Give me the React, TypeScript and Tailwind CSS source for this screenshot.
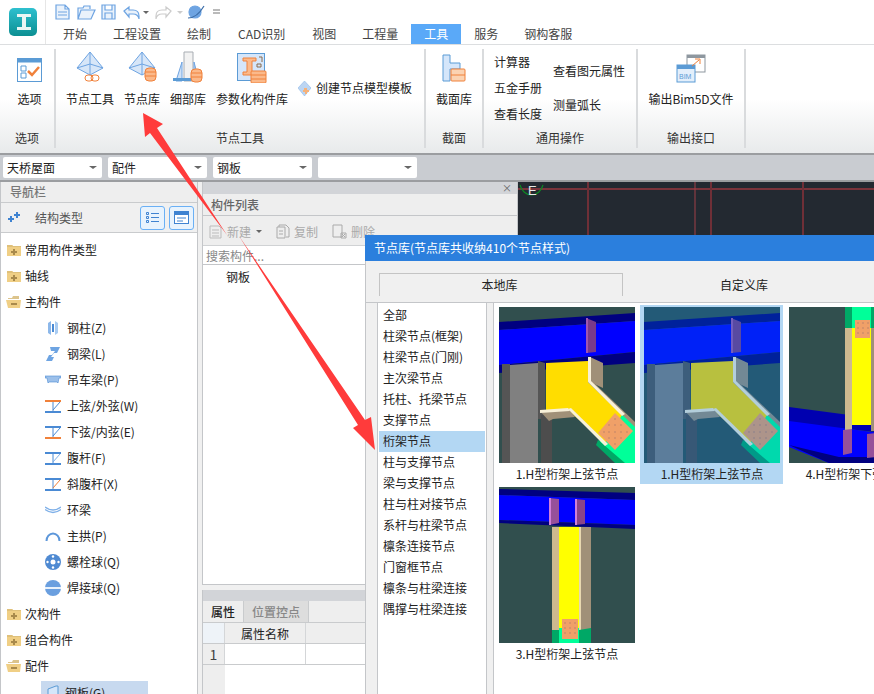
import type { ReactNode } from "react";

const tabs = ["开始", "工程设置", "绘制", "CAD识别", "视图", "工程量", "工具", "服务", "钢构客服"];
const nodeTypes = [
  "全部", "柱梁节点(框架)", "柱梁节点(门刚)", "主次梁节点", "托柱、托梁节点", "支撑节点", "桁架节点", "柱与支撑节点",
  "梁与支撑节点", "柱与柱对接节点", "系杆与柱梁节点", "檩条连接节点", "门窗框节点", "檩条与柱梁连接", "隅撑与柱梁连接",
];

const Folder = ({ open }: { open?: boolean }) => (
  <svg width="16" height="14" viewBox="0 0 16 14" className="shrink-0">
    {open ? (
      <>
        <path d="M2 3h4l1-2h6v3H2z" fill="#dcc48c" />
        <path d="M0 5h15l-1 8H2z" fill="#f0cf85" />
        <rect x="5" y="8" width="6" height="2" fill="#a98a4c" />
      </>
    ) : (
      <>
        <path d="M1 2h5l1 1h8v10H1z" fill="#f0cf85" />
        <path d="M1 2h5l1 1h8v1H1z" fill="#dfc07a" />
        <path d="M7 6h2v2h2v2H9v2H7v-2H5V8h2z" fill="#a98a4c" />
      </>
    )}
  </svg>
);

const Truss = ({ top, bottom, diag }: { top: string; bottom: string; diag: string }) => (
  <svg width="16" height="13" viewBox="0 0 16 13">
    <rect width="16" height="2" fill={top} />
    <rect y="11" width="16" height="2" fill={bottom} />
    <path d="M8 2v9" stroke="#4a8ad4" />
    <path d="M8 10 15 2" stroke={diag} />
  </svg>
);

const blue = "#4a8ad4";
const orange = "#f0813a";

const childIcons: ReactNode[] = [
  <svg width="16" height="16" viewBox="0 0 16 16"><path d="M3 3l3-2v14l-3-2z" fill="#8db8ea" /><path d="M7 4h2v8H7z" fill="#4a8ad4" /><path d="M10 1l3 2v10l-3 2z" fill="#a9ccf2" /></svg>,
  <svg width="16" height="16" viewBox="0 0 16 16"><path d="M5 1h10l-3 6H9l-3 4h3l-2 4H1l3-6h3l3-4H6z" fill="#6ea4e2" /></svg>,
  <svg width="16" height="10" viewBox="0 0 16 10"><path d="M0 1h16v2h-2l-1 5-1-1H4L3 8 2 3H0z" fill="#9cc0ea" stroke="#4a8ad4" strokeWidth=".6" /></svg>,
  <Truss top={orange} bottom={blue} diag={blue} />,
  <Truss top={blue} bottom={orange} diag={blue} />,
  <Truss top={blue} bottom={blue} diag="#7fb0e8" />,
  <Truss top={blue} bottom={blue} diag={orange} />,
  <svg width="16" height="8" viewBox="0 0 16 8"><path d="M0 1q8 6 16 0M0 3.500q8 6 16 0" fill="none" stroke="#7fb0e8" strokeWidth="1.400" /></svg>,
  <svg width="16" height="10" viewBox="0 0 16 10"><path d="M1.500 10a6.500 7.500 0 0 1 13 0" fill="none" stroke="#5d97da" strokeWidth="2" /></svg>,
  <svg width="16" height="16" viewBox="0 0 16 16"><circle cx="8" cy="8" r="8" fill="#4f8ad2" /><circle cx="8" cy="8" r="2.500" fill="#fff" /><circle cx="8" cy="2.500" r="1.200" fill="#fff" /><circle cx="8" cy="13.500" r="1.200" fill="#fff" /><circle cx="2.500" cy="8" r="1.200" fill="#fff" /><circle cx="13.500" cy="8" r="1.200" fill="#fff" /></svg>,
  <svg width="16" height="16" viewBox="0 0 16 16"><circle cx="8" cy="8" r="8" fill="#6a9fdf" /><rect y="7" width="16" height="2" fill="#e8f1fb" /></svg>,
];
const children = ["钢柱(Z)", "钢梁(L)", "吊车梁(P)", "上弦/外弦(W)", "下弦/内弦(E)", "腹杆(F)", "斜腹杆(X)", "环梁", "主拱(P)", "螺栓球(Q)", "焊接球(Q)"];

// 节点预览图里用到的点阵板
const Dots = ({ pts, r = 0.8 }: { pts: [number, number][]; r?: number }) => (
  <g fill="#b8806a">
    {pts.map(([x, y]) => (
      <circle key={`${x}-${y}`} cx={x} cy={y} r={r} />
    ))}
  </g>
);

const Thumb1 = ({ tint }: { tint?: boolean }) => (
  <svg width="136" height="156" viewBox="0 0 136 156" className="block">
    <rect width="136" height="156" fill="#314f4e" />
    <path d="M0 15 136 6v8L0 23z" fill="#000080" />
    <path d="M0 23 136 14v31L0 58z" fill="#0000ff" />
    <path d="M0 58 136 45v11L0 66z" fill="#000080" />
    <path d="M87 11l10 4v30l-10 1z" fill="#7a3a8a" />
    <rect x="87" y="11" width="2" height="35" fill="#a055b0" />
    <path d="M3 57h8v99H3z" fill="#555" />
    <path d="M11 58l28-2v100H11z" fill="#808080" />
    <path d="M39 54l7 2v56h-7z" fill="#555" />
    <rect x="42" y="108" width="11" height="48" fill="#4d4d4d" />
    <path d="M123 107l13 9v40h-12L99 133l7 3z" fill="#00ff99" />
    <path d="M99 133l27 23h-10l-19-18z" fill="#00a866" />
    <path d="M47 56l42-2v21l34 33-17 28-37-33H47z" fill="#ffdd00" />
    <path d="M91 50l13 6v25l-13-6z" fill="#a09078" />
    <rect x="89" y="50" width="3" height="25" fill="#f8f0d8" />
    <path d="M89 75l4-1 43 41v5z" fill="#a09078" />
    <path d="M89 75l2-2 35 34-3 2z" fill="#f8f0d8" />
    <path d="M41 104l29-2 6 8-22 2-4 2z" fill="#a09078" />
    <path d="M41 103l28-2 2 3-30 2z" fill="#f8f0d8" />
    <path d="M69 102l3-1 37 36-3 2z" fill="#f8f0d8" />
    <path d="M116 106l18 18-18 19-17-17z" fill="#f0a068" />
    <Dots pts={[[116, 112], [110, 118], [116, 118], [122, 118], [105, 125], [110, 125], [116, 125], [122, 125], [128, 125], [110, 131], [116, 131], [122, 131], [116, 137]]} />
    {tint && <rect width="136" height="156" fill="#0076e4" opacity=".28" />}
  </svg>
);

const Thumb4 = () => (
  <svg width="136" height="156" viewBox="0 0 136 156" className="block">
    <rect width="136" height="156" fill="#314f4e" />
    <path d="M0 100l136 18v12L0 116z" fill="#0000b0" />
    <path d="M0 114l136 18v24H40L0 140z" fill="#0000ff" />
    <path d="M0 138l50 12h86v6H40z" fill="#000080" />
    <rect x="56" y="0" width="7" height="124" fill="#cdb98f" />
    <rect x="63" y="0" width="19" height="118" fill="#ffff00" />
    <rect x="82" y="0" width="18" height="124" fill="#a09078" />
    <rect x="56" y="0" width="7" height="21" fill="#00a866" />
    <rect x="63" y="0" width="19" height="21" fill="#00ff99" />
    <rect x="82" y="0" width="18" height="21" fill="#00a866" />
    <rect x="66" y="13" width="15" height="18" fill="#f0a068" />
    <Dots pts={[[69, 16], [74, 16], [79, 16], [69, 21], [74, 21], [79, 21], [69, 26], [74, 26], [79, 26]]} />
    <path d="M54 123l9-1v24l-9 2z" fill="#96509a" />
    <path d="M78 127l10-1v24l-10 1z" fill="#96509a" />
  </svg>
);

const Thumb3 = () => (
  <svg width="136" height="156" viewBox="0 0 136 156" className="block">
    <rect width="136" height="156" fill="#314f4e" />
    <path d="M0 2l136 4v7L0 8z" fill="#000080" />
    <path d="M0 8l136 5v25L0 33z" fill="#0000ff" />
    <path d="M0 33l136 5v4L0 36z" fill="#000080" />
    <rect x="53" y="40" width="7" height="103" fill="#cdb98f" />
    <rect x="60" y="40" width="20" height="103" fill="#ffff00" />
    <rect x="80" y="40" width="12" height="103" fill="#a09078" />
    <rect x="80" y="40" width="2" height="103" fill="#e8d8b0" />
    <path d="M53 143h7v13h-7zM80 143l12-2v15H80z" fill="#00a866" />
    <rect x="60" y="141" width="20" height="15" fill="#00ff99" />
    <rect x="63" y="132" width="16" height="20" fill="#f0a068" />
    <Dots pts={[[66, 136], [71, 136], [76, 136], [66, 141], [71, 141], [76, 141], [66, 146], [71, 146], [76, 146]]} />
    <path d="M50 11l10 1v24l-10 2z" fill="#96509a" />
    <rect x="50" y="11" width="2" height="27" fill="#d080d8" />
    <path d="M76 12l10 1v24l-10 1z" fill="#8a4488" />
    <rect x="76" y="12" width="2" height="26" fill="#d080d8" />
  </svg>
);

const RibbonButton = ({ icon, label }: { icon: ReactNode; label: string }) => (
  <div className="flex flex-col items-center">
    <div className="flex h-[34px] items-end justify-center">{icon}</div>
    <span className="mt-[9px] whitespace-nowrap leading-[14px]">{label}</span>
  </div>
);

const RibbonGroup = ({ width, label, children: content, pad }: { width: string; label: string; children: ReactNode; pad: string }) => (
  <div className={`${width} flex shrink-0 flex-col border-r-2 border-[#d9dbdd]`}>
    <div className={`${pad} h-[82px]`}>{content}</div>
    <div className="text-center leading-[14px] text-[#333]">{label}</div>
  </div>
);

const Pyramid = ({ children: extra }: { children: ReactNode }) => (
  <svg width="30" height="32" viewBox="0 0 30 32">
    <path d="M15 1 2 17l13 7 13-7z" fill="#d7e6f8" stroke="#6ea4e2" />
    <path d="M15 1v23M2 17l13-4 13 4" stroke="#6ea4e2" fill="none" />
    {extra}
  </svg>
);

const Db = ({ x, y }: { x: number; y: number }) => (
  <g>
    <rect x={x} y={y} width="11" height="13" rx="4" fill="#fbb98a" stroke={orange} />
    <path d={`M${x} ${y + 4}h11M${x} ${y + 8}h11`} stroke={orange} />
  </g>
);

const Select = ({ value }: { value: string }) => (
  <div className="flex h-[21px] w-[99px] items-center justify-between rounded-[2px] bg-white pl-[4px] pr-[5px] text-[#222]">
    <span>{value}</span>
    <span className="h-0 w-0 border-x-[4px] border-t-[3px] border-x-transparent border-t-[#666]" />
  </div>
);

const ToolItem = ({ label, icon }: { label: string; icon: ReactNode }) => (
  <div className="flex items-center gap-[4px] text-[#aaa]">
    {icon}
    <span>{label}</span>
  </div>
);

const App = () => {
  return (
    <div className="relative flex h-[694px] w-[874px] flex-col overflow-hidden bg-white font-['Noto_Sans_CJK_SC','Liberation_Sans',sans-serif] text-[12px] text-[#222]">
      {/* 标题栏 + 选项卡 */}
      <div className="flex h-[45px] shrink-0 border-b border-[#dcdee0]">
        <div className="flex w-[46px] shrink-0 border-r border-[#e6e6e6] pl-[9px] pt-[8px]">
          <svg width="28" height="28" viewBox="0 0 28 28">
            <defs>
              <linearGradient id="lg" x1="0" y1="0" x2="0" y2="1">
                <stop offset="0" stopColor="#2ec0cf" />
                <stop offset="1" stopColor="#0c8f92" />
              </linearGradient>
            </defs>
            <rect width="28" height="28" rx="5" fill="url(#lg)" />
            <path d="M8 6h14v3h-5v10h5v3H8v-3h5V9H8z" fill="#e9f6f4" />
          </svg>
        </div>
        <div className="flex flex-col pl-[4px]">
          <div className="flex h-[24px] items-center pl-[5px]">
            <svg width="170" height="18" viewBox="0 0 170 18" fill="none" stroke="#6ea4e2" strokeWidth="1.200">
              <path d="M1 2h9l4 4v10H1zM10 2v4h4M3 9h9M3 12h9" fill="#eaf2fb" />
              <path d="M23 16V5h5l1-2h6v3M23 16l3-9h14l-4 9z" fill="#eaf2fb" />
              <path d="M47 2h13v14H47zM50 2v5h7V2M50 16v-6h7v6" fill="#eaf2fb" />
              <path d="M69 8l5-4v3h4q6 0 6 6v3q-1-5-6-5h-4v3z" fill="#eaf2fb" />
              <path d="M88 8h6l-3 3z" fill="#666" stroke="none" />
              <path d="M116 8l-5-4v3h-4q-6 0-6 6v3q1-5 6-5h4v3z" stroke="#ccc" />
              <path d="M122 8h6l-3 3z" fill="#ccc" stroke="none" />
              <circle cx="140" cy="9" r="6" fill="#6ea4e2" />
              <path d="M133 15q9 0 16-12" stroke="#3d6ea8" />
              <path d="M158 7h7M158 10h7" stroke="#777" />
            </svg>
          </div>
          <div className="flex h-[20px] text-[#444]">
            {tabs.map((t) => (
              <div key={t} className={`flex items-center ${t === "CAD识别" ? "px-[14px]" : "px-[13px]"} ${t === "工具" ? "bg-[#5aa9f8] text-white" : ""}`}>
                {t}
              </div>
            ))}
          </div>
        </div>
      </div>

      {/* 功能区 */}
      <div className="flex h-[108px] shrink-0 bg-gradient-to-b from-white from-50% to-[#e8eaeb] pb-[5px] pt-[4px]">
        <RibbonGroup width="w-[56px]" label="选项" pad="pl-[5px]">
          <RibbonButton
            label="选项"
            icon={
              <svg width="26" height="25" viewBox="0 0 26 25" fill="none">
                <rect x=".5" y=".5" width="24" height="23" fill="#fff" stroke="#5b9bd5" />
                <rect x=".5" y=".5" width="24" height="4" fill="#5b9bd5" />
                <path d="M4 8h5v5H4zM4 15h5v5H4z" stroke="#5b9bd5" />
                <path d="M11 13l4 4 7-8" stroke={orange} strokeWidth="2.500" />
              </svg>
            }
          />
        </RibbonGroup>
        <RibbonGroup width="w-[370px]" label="节点工具" pad="flex items-start gap-[10px] pl-[10px]">
          <RibbonButton
            label="节点工具"
            icon={
              <Pyramid>
                <rect x="10" y="24" width="8" height="6" rx="3" fill="none" stroke={orange} />
                <rect x="16" y="24" width="8" height="6" rx="3" fill="none" stroke={orange} />
              </Pyramid>
            }
          />
          <RibbonButton label="节点库" icon={<Pyramid><Db x={18} y={17} /></Pyramid>} />
          <RibbonButton
            label="细部库"
            icon={
              <svg width="30" height="32" viewBox="0 0 30 32">
                <path d="M11 1h9v29h-9z" fill="#f2f2f2" stroke="#a8adb3" />
                <path d="M9 11v19H3zM21 11l5 19h-5z" fill="#cfe1f6" stroke="#6ea4e2" />
                <rect y="27" width="22" height="3" fill="#5b9bd5" />
                <Db x={18} y={18} />
              </svg>
            }
          />
          <RibbonButton
            label="参数化构件库"
            icon={
              <svg width="30" height="30" viewBox="0 0 30 30">
                <rect x=".5" y=".5" width="27" height="27" fill="#d5e6fa" stroke="#5b9bd5" />
                <path d="M6 5h13v3h-4v11h4v3H6v-3h4V8H6z" fill="#fbb98a" stroke={orange} />
                <path d="M22 4h3v5M20 11h4v3h-4z" stroke="#8a6a4a" fill="none" />
                <rect x="14" y="18" width="15" height="12" rx="1" fill="#fbb98a" stroke={orange} />
                <path d="M14 22h15M14 26h15" stroke={orange} />
              </svg>
            }
          />
          <div className="ml-0 mt-[30px] flex items-center gap-[5px]">
            <svg width="13" height="15" viewBox="0 0 13 15">
              <path d="M6.500 0 0 7l6.500 8L13 7z" fill="#bcd5f2" stroke="#8db8ea" strokeWidth=".6" />
              <path d="M6 7h3v2h2v2H9v2H7v-2H5V9h1z" fill="#f6b27a" />
            </svg>
            <span className="whitespace-nowrap">创建节点模型模板</span>
          </div>
        </RibbonGroup>
        <RibbonGroup width="w-[58px]" label="截面" pad="flex pl-[10px]">
          <RibbonButton
            label="截面库"
            icon={
              <svg width="24" height="29" viewBox="0 0 24 29">
                <path d="M1 1h7v8h10v6H8v12H1z" fill="#d5e6fa" stroke="#5b9bd5" />
                <rect x="9" y="15" width="14" height="12" rx="1" fill="#fbd3b2" stroke={orange} />
                <path d="M9 21h14" stroke={orange} />
              </svg>
            }
          />
        </RibbonGroup>
        <RibbonGroup width="w-[154px]" label="通用操作" pad="flex gap-[11px] pl-[10px]">
          <div className="flex flex-col gap-[12px] pt-[6px]">
            <span className="leading-[14px]">计算器</span>
            <span className="leading-[14px]">五金手册</span>
            <span className="leading-[14px]">查看长度</span>
          </div>
          <div className="flex flex-col gap-[20px] pt-[15px]">
            <span className="whitespace-nowrap leading-[14px]">查看图元属性</span>
            <span className="leading-[14px]">测量弧长</span>
          </div>
        </RibbonGroup>
        <RibbonGroup width="w-[108px]" label="输出接口" pad="flex justify-center">
          <RibbonButton
            label="输出Bim5D文件"
            icon={
              <svg width="30" height="29" viewBox="0 0 30 29" fill="none">
                <rect x="11" y="1" width="18" height="17" fill="#fff" stroke="#8e979f" />
                <rect x="11" y="1" width="18" height="3" fill="#8e979f" />
                <rect x="1" y="11" width="18" height="17" fill="#e3effb" stroke="#5b9bd5" />
                <rect x="1" y="11" width="18" height="4" fill="#5b9bd5" />
                <path d="M16 12l7-6M19 5h5v5" stroke={orange} />
                <text x="3" y="25" fontSize="7" fill="#5b9bd5" fontFamily="Liberation Sans">BIM</text>
              </svg>
            }
          />
        </RibbonGroup>
      </div>

      {/* 下拉条 */}
      <div className="flex h-[29px] shrink-0 items-center gap-[6px] border-y-2 border-y-[#9b9da0] bg-[#c9ccd1] pl-[3px]">
        <Select value="天桥屋面" />
        <Select value="配件" />
        <Select value="钢板" />
        <Select value="" />
      </div>

      <div className="flex min-h-0 flex-1 bg-[#f0f0f0]">
        {/* 导航栏 */}
        <div className="w-[198px] shrink-0 overflow-hidden border-x border-[#c4c6c9] bg-white">
          <div className="flex h-[21px] items-center border-b border-[#c9cbcd] bg-[#eeeeee] pl-[9px] font-medium text-[#777]">导航栏</div>
          <div className="flex h-[30px] items-center border-b border-[#c9cbcd] bg-[#f0f0f0] pl-[6px] pr-[3px]">
            <svg width="13" height="11" viewBox="0 0 13 11" fill="#3f83d1">
              <path d="M3 4h2v2h2v2H5v2H3V8H1V6h2zM9 0h2v2h2v2h-2v2H9V4H7V2h2z" />
            </svg>
            <span className="ml-[15px] flex-1 text-[#555]">结构类型</span>
            <div className="flex h-[24px] w-[25px] items-center justify-center rounded-[3px] border border-[#6ab0f5] bg-[#e8f3fd]">
              <svg width="13" height="12" viewBox="0 0 13 12" fill="none" stroke="#3f83d1">
                <path d="M.5.500h2v2h-2zM.5 4.500h2v2h-2zM.5 8.500h2v2h-2zM5 1.500h8M5 5.500h8M5 9.500h8" />
              </svg>
            </div>
            <div className="ml-[4px] flex h-[24px] w-[25px] items-center justify-center rounded-[3px] border border-[#6ab0f5] bg-[#e8f3fd]">
              <svg width="15" height="13" viewBox="0 0 15 13">
                <rect x=".5" y=".5" width="14" height="12" fill="#fff" stroke="#3f83d1" />
                <rect width="15" height="4" fill="#3f83d1" />
                <path d="M3 7h9M3 10h6" stroke="#3f83d1" />
              </svg>
            </div>
          </div>
          <div className="pt-[4px] leading-[26px]">
            <div className="flex h-[26px] items-center gap-[3px] pl-[5px]"><Folder /> 常用构件类型</div>
            <div className="flex h-[26px] items-center gap-[3px] pl-[5px]"><Folder /> 轴线</div>
            <div className="flex h-[26px] items-center gap-[3px] pl-[5px]"><Folder open /> 主构件</div>
            {children.map((c, i) => (
              <div key={c} className="flex h-[26px] items-center pl-[44px]">
                <span className="flex w-[22px] shrink-0 items-center">{childIcons[i]}</span>
                {c}
              </div>
            ))}
            <div className="flex h-[26px] items-center gap-[3px] pl-[5px]"><Folder /> 次构件</div>
            <div className="flex h-[26px] items-center gap-[3px] pl-[5px]"><Folder /> 组合构件</div>
            <div className="flex h-[26px] items-center gap-[3px] pl-[5px]"><Folder open /> 配件</div>
            <div className="ml-[40px] mt-[2px] flex h-[24px] w-[107px] items-center bg-[#c7d9ef] pl-[6px]">
              <svg width="13" height="16" viewBox="0 0 13 16" className="mr-[5px]">
                <path d="M1 4l8-3h2v14H1z" fill="#d5e6fa" stroke="#5b9bd5" />
              </svg>
              钢板(G)
            </div>
          </div>
        </div>

        {/* 构件列表 + 属性 */}
        <div className="ml-[4px] flex w-[316px] shrink-0 flex-col">
          <div className="flex flex-1 flex-col border-x border-b border-[#c4c6c9] bg-white">
            <div className="flex h-[12px] items-center justify-end bg-[#d2d4d8] pr-[5px] text-[10px] leading-none text-[#666]">×</div>
            <div className="flex h-[22px] items-center border-b border-[#c4c6c9] bg-[#eeeeee] pl-[8px] font-medium text-[#666]">构件列表</div>
            <div className="flex h-[30px] items-center gap-[14px] border-b border-[#d0d2d4] bg-[#eeeeee] pl-[5px] pt-[2px]">
              <ToolItem
                label="新建"
                icon={
                  <svg width="15" height="15" viewBox="0 0 15 15" fill="none" stroke="#bbb">
                    <path d="M2 2h9l2 2v10H2zM4 6h7M4 9h7M4 12h7" />
                  </svg>
                }
              />
              <span className="-ml-[9px] h-0 w-0 border-x-[3px] border-t-[3px] border-x-transparent border-t-[#666]" />
              <ToolItem
                label="复制"
                icon={
                  <svg width="14" height="15" viewBox="0 0 14 15" fill="none" stroke="#aaa">
                    <path d="M3 3V1h7l3 3v9h-3M1 3h8v11H1zM3 7h4M3 10h4" />
                  </svg>
                }
              />
              <ToolItem
                label="删除"
                icon={
                  <svg width="15" height="15" viewBox="0 0 15 15" fill="none" stroke="#aaa">
                    <path d="M1 1h9v12H1zM9 9h5v5H9zM10 10l3 3M13 10l-3 3" />
                  </svg>
                }
              />
            </div>
            <div className="flex h-[19px] items-center border-b border-[#c4c6c9] pl-[3px] pt-[2px] text-[#888]">搜索构件...</div>
            <div className="flex h-[24px] items-center pl-[23px]">钢板</div>
          </div>
          <div className="mt-[5px] flex h-[104px] shrink-0 flex-col border-x border-[#c4c6c9] bg-white">
            <div className="h-[11px] shrink-0 bg-[#d2d4d8]" />
            <div className="flex h-[22px] shrink-0 border-b border-[#c9cbcd] bg-[#eeeeee]">
              <div className="flex w-[40px] items-center justify-center font-medium">属性</div>
              <div className="flex w-[66px] items-center justify-center border-x border-[#c9cbcd] bg-[#dddddd] font-medium text-[#888]">位置控点</div>
            </div>
            <div className="flex h-[21px] shrink-0 border-b border-[#c9cbcd] bg-[#eeeeee]">
              <div className="w-[22px] border-r border-[#d4d6d8] bg-[#eef3f8]" />
              <div className="flex w-[81px] items-center justify-center border-r border-[#d4d6d8] pt-[2px]">属性名称</div>
            </div>
            <div className="flex h-[21px] shrink-0 border-b border-[#c9cbcd]">
              <div className="flex w-[22px] items-center justify-center border-r border-[#d4d6d8] bg-[#eeeeee] text-[14px] text-[#444]">1</div>
              <div className="w-[81px] border-r border-[#d4d6d8]" />
            </div>
            <div className="flex-1"><div className="h-full w-[22px] bg-[#eeeeee]" /></div>
          </div>
        </div>

        {/* CAD 画布 */}
        <div className="flex-1 bg-[#232931]">
          <svg width="356" height="60" viewBox="0 0 356 60" className="block">
            <path d="M0 7h356" stroke="#7a333b" strokeWidth="2" />
            <path d="M70 0v60M193 0v60M285 0v60" stroke="#6f2f37" strokeWidth="2" />
            <path d="M177 0v60" stroke="#a04048" />
            <path d="M2 3a12 14 0 0 0 23 0" fill="none" stroke="#0d8a24" strokeWidth="1.200" />
            <text x="10" y="13" fontSize="13" fill="#e8e8e8" fontFamily="Liberation Sans">E</text>
          </svg>
        </div>
      </div>

      {/* 节点库对话框 */}
      <div className="absolute left-[365px] top-[235px] flex h-[459px] w-[520px] flex-col overflow-hidden bg-[#f0f0f0]">
        <div className="flex h-[26px] shrink-0 items-center bg-[#2b7fdd] pl-[9px] text-white">节点库(节点库共收纳410个节点样式)</div>
        <div className="flex h-[42px] shrink-0 items-end border-b border-l border-[#c4c6c9] pl-[13px]">
          <div className="mb-[6px] flex h-[23px] w-[244px] items-center justify-center border-x border-t border-[#c4c4c4] pr-[3px]">本地库</div>
          <div className="mb-[6px] flex h-[23px] w-[242px] items-center justify-center">自定义库</div>
        </div>
        <div className="flex min-h-0 flex-1 border-l border-[#c4c6c9] pl-[11px]">
          <div className="w-[110px] shrink-0 border-x border-[#c4c6c9] bg-white px-[1px] pt-[2px]">
            {nodeTypes.map((n) => (
              <div key={n} className={`flex h-[21px] items-center whitespace-nowrap pb-[1px] pl-[4px] ${n === "桁架节点" ? "bg-[#b3d7f3]" : ""}`}>
                {n}
              </div>
            ))}
          </div>
          <div className="ml-[6px] flex-1 border-l border-[#c4c6c9] bg-white pl-[1px] pt-[2px]">
            <div className="grid grid-cols-[143px_143px_143px] gap-x-[2px] gap-y-[1px]">
              <div className="h-[179px] pl-[4px] pt-[2px]">
                <Thumb1 />
                <div className="w-[136px] pt-[3px] text-center leading-[16px]">1.H型桁架上弦节点</div>
              </div>
              <div className="h-[179px] bg-[#b3d7f3] pl-[4px] pt-[2px]">
                <Thumb1 tint />
                <div className="w-[136px] pt-[3px] text-center leading-[16px]">1.H型桁架上弦节点</div>
              </div>
              <div className="h-[179px] pl-[4px] pt-[2px]">
                <Thumb4 />
                <div className="w-[136px] pt-[3px] text-center leading-[16px]">4.H型桁架下弦节点</div>
              </div>
              <div className="h-[179px] pl-[4px] pt-[2px]">
                <Thumb3 />
                <div className="w-[136px] pt-[3px] text-center leading-[16px]">3.H型桁架上弦节点</div>
              </div>
            </div>
          </div>
        </div>
      </div>

      {/* 红色标注箭头 */}
      <svg width="874" height="694" viewBox="0 0 874 694" className="pointer-events-none absolute left-0 top-0">
        <path d="M143 113 163 124 157 128 227 235 150 133 145 137z" fill="#ff3b3b" />
        <path d="M239 236 365 420 371 417 375 450 353 428 358 425z" fill="#ff3b3b" />
      </svg>
    </div>
  );
};

export default App;
